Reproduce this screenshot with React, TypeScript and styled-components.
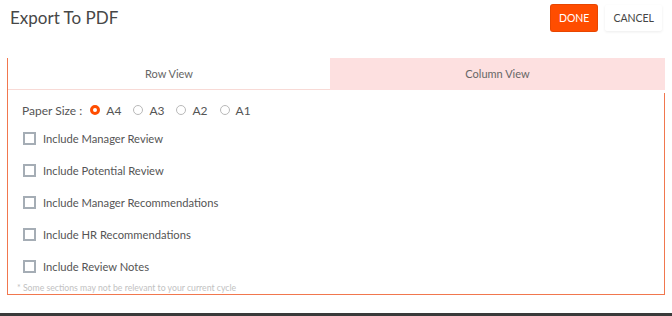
import React, { useState } from "react"
import styled, { createGlobalStyle } from "styled-components"

const Global = createGlobalStyle`
  html, body {
    margin: 0;
    padding: 0;
    background: #3a3a3a;
  }
  * {
    box-sizing: border-box;
  }
`

const Modal = styled.div`
  width: 672px;
  height: 313px;
  background: #ffffff;
  font-family: Lato, "Open Sans", sans-serif;
  color: #555;
  overflow: hidden;
`

const Header = styled.div`
  height: 58px;
  display: flex;
  align-items: flex-start;
  justify-content: space-between;
  padding: 5px 10px 0 10px;
`

const Title = styled.h1`
  margin: 2px 0 0 0;
  font-size: 17px;
  font-weight: 400;
  color: #474747;
`

const Actions = styled.div`
  display: flex;
  gap: 8px;
`

const Button: any = styled.button`
  height: 26px;
  padding: 0 ${(props: any) => (props.primary ? "8px" : "8px")};
  border: none;
  border-radius: 2px;
  font-family: Lato, sans-serif;
  font-size: 10.5px;
  cursor: pointer;
  background: ${(props: any) => (props.primary ? "#ff4d00" : "#ffffff")};
  color: ${(props: any) => (props.primary ? "#ffffff" : "#444")};
  box-shadow: ${(props: any) =>
    props.primary ? "0 0 0 1px #e84600" : "0 1px 3px rgba(0,0,0,0.08)"};
`

const Panel = styled.div`
  margin-left: 7px;
  width: 658px;
  border-left: 1px solid #f1774e;
`

const TabRow = styled.div`
  display: flex;
  height: 32px;
`

const Tab: any = styled.div`
  flex: ${(props: any) => (props.wide ? "0 0 335px" : "1")};
  display: flex;
  align-items: center;
  justify-content: center;
  font-size: 11px;
  color: #666;
  background: ${(props: any) => (props.active ? "#fde0e0" : "#ffffff")};
  border-bottom: 1px solid
    ${(props: any) => (props.active ? "#fde0e0" : "#f8dad6")};
  cursor: pointer;
`

const Body = styled.div`
  position: relative;
  height: 205px;
  padding: 10px 0 0 14px;
  border-bottom: 1px solid #f1774e;

  &::after {
    content: "";
    position: absolute;
    right: 0;
    top: 3px;
    bottom: 0;
    width: 1px;
    background: #f1774e;
  }
`

const SizeRow = styled.div`
  display: flex;
  align-items: center;
  height: 20px;
  font-size: 12px;
  color: #555;
`

const SizeLabel = styled.span`
  margin-right: 8px;
`

const RadioOption = styled.label`
  display: flex;
  align-items: center;
  margin-right: 12px;
  cursor: pointer;
`

const RadioDot: any = styled.span`
  width: 10px;
  height: 10px;
  border-radius: 50%;
  margin-right: 6px;
  background: #fff;
  border: ${(props: any) =>
    props.checked ? "3px solid #ff4d00" : "1px solid #b9b9b9"};
`

const CheckList = styled.div`
  margin-top: 2px;
`

const CheckRow = styled.label`
  display: flex;
  align-items: center;
  height: 32px;
  font-size: 11.2px;
  color: #555;
  cursor: pointer;
`

const Box: any = styled.span`
  width: 13px;
  height: 13px;
  margin: 0 7px 0 1px;
  border: 2px solid #a5adb5;
  background: ${(props: any) => (props.checked ? "#a5adb5" : "#fff")};
`

const Note = styled.div`
  margin: 0 0 0 -5px;
  font-size: 8.7px;
  color: #c2c2c2;
`

const sizes = ["A4", "A3", "A2", "A1"]
const options = [
  "Include Manager Review",
  "Include Potential Review",
  "Include Manager Recommendations",
  "Include HR Recommendations",
  "Include Review Notes",
]

export default function App() {
  const [view, setView] = useState("column")
  const [size, setSize] = useState("A4")
  const [checked, setChecked] = useState<string[]>([])

  const toggle = (o: string) =>
    setChecked(c => (c.includes(o) ? c.filter(x => x !== o) : [...c, o]))

  return (
    <>
      <Global />
      <Modal>
        <Header>
          <Title>Export To PDF</Title>
          <Actions>
            <Button primary>DONE</Button>
            <Button>CANCEL</Button>
          </Actions>
        </Header>
        <Panel>
          <TabRow>
            <Tab active={view === "row"} onClick={() => setView("row")}>
              Row View
            </Tab>
            <Tab
              wide
              active={view === "column"}
              onClick={() => setView("column")}
            >
              Column View
            </Tab>
          </TabRow>
          <Body>
            <SizeRow>
              <SizeLabel>Paper Size :</SizeLabel>
              {sizes.map(s => (
                <RadioOption key={s} onClick={() => setSize(s)}>
                  <RadioDot checked={size === s} />
                  {s}
                </RadioOption>
              ))}
            </SizeRow>
            <CheckList>
              {options.map(o => (
                <CheckRow key={o} onClick={() => toggle(o)}>
                  <Box checked={checked.includes(o)} />
                  {o}
                </CheckRow>
              ))}
            </CheckList>
            <Note>* Some sections may not be relevant to your current cycle</Note>
          </Body>
        </Panel>
      </Modal>
    </>
  )
}
